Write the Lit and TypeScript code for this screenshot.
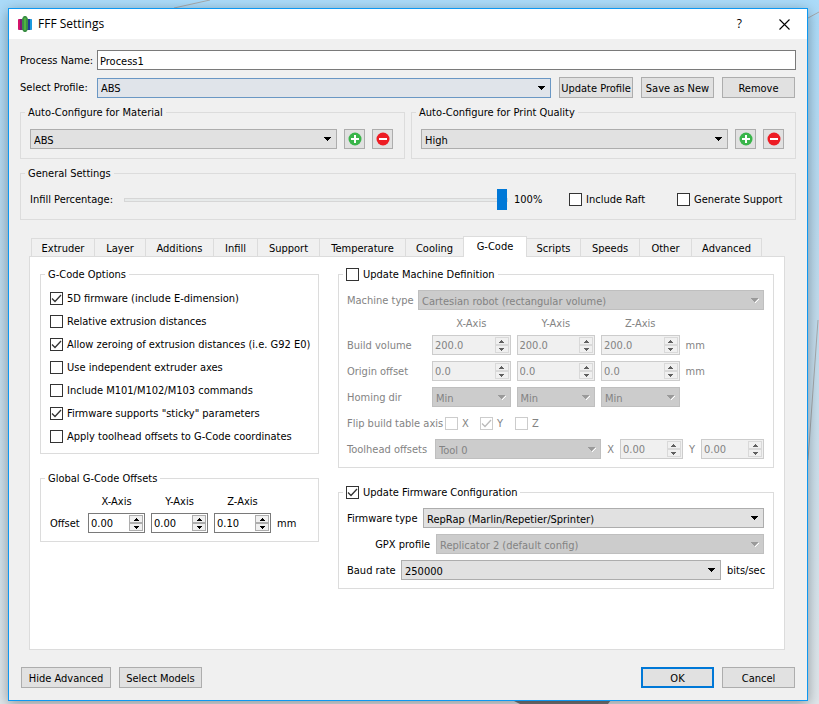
import { LitElement, html, css, svg, nothing } from "lit";
import { customElement } from "lit/decorators.js";
import { classMap } from "lit/directives/class-map.js";

const TABS = [
  "Extruder", "Layer", "Additions", "Infill", "Support", "Temperature",
  "Cooling", "G-Code", "Scripts", "Speeds", "Other", "Advanced",
];

const GCODE_OPTIONS: [string, boolean][] = [
  ["5D firmware (include E-dimension)", true],
  ["Relative extrusion distances", false],
  ["Allow zeroing of extrusion distances (i.e. G92 E0)", true],
  ["Use independent extruder axes", false],
  ["Include M101/M102/M103 commands", false],
  ["Firmware supports \"sticky\" parameters", true],
  ["Apply toolhead offsets to G-Code coordinates", false],
];

const AXES = ["X", "Y", "Z"];

@customElement("app-root")
export class AppRoot extends LitElement {
  static styles = css`
    :host {
      display: block;
      --line: #dcdcdc;
      --edge: #adadad;
      --dim: #838383;
    }
    * { box-sizing: border-box; }
    button, input, select, fieldset, legend {
      font: inherit;
      color: inherit;
      margin: 0;
      padding: 0;
      border-radius: 0;
    }
    .desktop {
      position: relative;
      display: flex;
      min-height: 100vh;
      padding: 8px 11px 3px 8px;
      background: linear-gradient(#abdbf9, #b9d9ee 30%, #d0e1eb 75%, #dfe6ea);
      font: 11px/15px "DejaVu Sans Condensed", "Noto Sans", sans-serif;
      color: #000;
    }
    .scene {
      position: absolute;
      inset: 0;
      width: 100%;
      height: 100%;
    }
    .dialog {
      position: relative;
      flex: 1;
      min-width: 0;
      display: flex;
      flex-direction: column;
      background: #f0f0f0;
      border: 1px solid #0d98f2;
      box-shadow: 0 3px 12px rgba(0, 0, 0, 0.35);
    }
    .titlebar {
      display: flex;
      align-items: center;
      height: 30px;
      padding: 0 17px 0 8px;
      background: #fff;
      font: 12px/16px "Open Sans", "Noto Sans", sans-serif;
    }
    .logo { width: 16px; height: 16px; margin-right: 5px; }
    .titlebar h1 { flex: 1; margin: 0; font: inherit; }
    .winbtn { display: flex; border: 0; background: none; margin-left: 37px; }
    .body {
      flex: 1;
      display: flex;
      flex-direction: column;
      padding: 11px 11px 12px;
    }
    .row { display: flex; align-items: center; gap: 6px; }
    .grow { flex: 1; min-width: 0; }

    .name { gap: 0; margin-bottom: 7px; }
    .name label, .profile label { flex: none; width: 77px; }
    .text {
      height: 20px;
      padding: 2px 2px 0;
      border: 1px solid #7a7a7a;
      background: #fff;
    }
    .profile { gap: 8px; margin-bottom: 7px; padding-right: 1px; }
    .profile label { margin-right: -8px; }

    .btn {
      height: 21px;
      padding-top: 1px;
      border: 1px solid var(--edge);
      background: #e1e1e1;
      white-space: nowrap;
    }
    .btn.w73 { width: 73px; }
    .btn.w74 { width: 74px; }
    .btn.w90 { width: 90px; }
    .btn.w83 { width: 83px; }
    .btn.primary { border: 2px solid #0078d7; }

    .combo { position: relative; display: flex; min-width: 0; }
    .combo select {
      appearance: none;
      width: 100%;
      height: 20px;
      padding: 2px 18px 0 3px;
      border: 1px solid var(--edge);
      background: #e1e1e1;
      opacity: 1;
    }
    .combo svg {
      position: absolute;
      right: 5px;
      top: 8px;
      width: 8px;
      height: 5px;
      pointer-events: none;
    }
    .combo.hot select { border-color: #6a97c4; background: #e0e4ea; }
    .combo select:disabled {
      border-color: #bfbfbf;
      background: #cccccc;
      color: var(--dim);
    }

    fieldset { min-width: 0; border: 1px solid var(--line); }
    legend { margin-left: -5px; padding: 0 3px; height: 14px; }
    .stack legend { margin-left: -4px; }
    legend .check { height: 14px; }

    .auto {
      display: grid;
      grid-template-columns: repeat(2, minmax(0, 1fr));
      gap: 6px;
      margin-bottom: 7px;
    }
    .auto fieldset { padding: 10px 11px 9px 9px; }
    .auto .row { gap: 7px; }
    .icon {
      display: flex;
      align-items: center;
      justify-content: center;
      width: 21px;
      height: 20px;
      border: 1px solid var(--edge);
      background: #e1e1e1;
    }
    .icon svg { width: 14px; height: 14px; }

    .general { padding: 9px 9px; }
    .general .row { height: 21px; }
    .general .lead { width: 88px; }
    .general output { width: 49px; }
    .general .raft { width: 102px; }
    .general .support { width: 109px; }
    .slider {
      appearance: none;
      height: 21px;
      background: none;
    }
    .slider::-webkit-slider-runnable-track {
      height: 4px;
      border: 1px solid #d6d6d6;
      background: #e7eaea;
    }
    .slider::-webkit-slider-thumb {
      appearance: none;
      width: 10px;
      height: 21px;
      margin-top: -10px;
      background: #0078d7;
    }

    .check { display: flex; align-items: center; gap: 4px; white-space: nowrap; }
    .box { position: relative; display: flex; flex: none; width: 13px; height: 13px; }
    .box input {
      appearance: none;
      width: 13px;
      height: 13px;
      border: 1px solid #333;
      background: #fff;
    }
    .box input:disabled { border-color: #ccc; }
    .box svg { position: absolute; inset: 0; pointer-events: none; }

    .tabs {
      display: grid;
      grid-template-columns: 63fr 51fr 68fr 44fr 62fr 86fr 58fr 63fr 54fr 59fr 52fr 71fr;
      align-items: end;
      height: 21px;
      margin: 16px 34px -1px 11px;
      position: relative;
    }
    .tab {
      height: 19px;
      min-width: 0;
      padding-top: 1px;
      border: solid var(--line);
      border-width: 1px 0 1px 1px;
      background: #f0f0f0;
      white-space: nowrap;
    }
    .tab:last-child { border-right-width: 1px; }
    .tab.active {
      height: 21px;
      margin-right: -1px;
      padding: 0 0 1px;
      border-width: 1px 1px 0;
      background: #fff;
      z-index: 1;
    }
    .pane {
      flex: 1;
      display: grid;
      grid-template-columns: minmax(0, 279fr) minmax(0, 436fr);
      align-items: start;
      gap: 19px;
      margin: 0 11px 17px 9px;
      padding: 10px 10px 60px;
      border: 1px solid var(--line);
      background: #fff;
    }
    .column { display: grid; gap: 17px; }
    .options { padding: 6px 9px 5px; }
    .options .check { height: 23px; }

    .grid { display: grid; gap: 6px; align-items: center; }
    .axis { height: 13px; text-align: center; }
    .offsets { padding: 9px 9px 8px; }
    .offsets .grid { grid-template-columns: 32px repeat(3, 57px) 1fr; }
    .stack { padding: 9px 9px 8px 8px; }
    .stack > .row + .row, .stack > .grid, .stack > .grid + .row { margin-top: 6px; }
    .stack > .row { height: 20px; }
    .machine .volume {
      grid-template-columns: 79px repeat(3, minmax(0, 79fr)) minmax(0, 79fr);
    }
    .dim { color: var(--dim); }
    .w65 { width: 65px; }
    .w92 { width: 92px; }
    .w82 { width: 82px; }
    .w70 { width: 70px; }
    .w83 { width: 83px; }
    .w48 { width: 48px; }
    .w37 { width: 37px; }
    .w65, .w92, .w82, .w70, .w48 { flex: none; white-space: nowrap; }
    .right { text-align: right; }
    .flip .check { width: 29px; }
    .tool .spin { width: 63px; }

    .spin {
      display: flex;
      min-width: 0;
      height: 20px;
      padding: 1px;
      border: 1px solid #7a7a7a;
      background: #fff;
    }
    .spin input {
      appearance: textfield;
      flex: 1;
      min-width: 0;
      width: 0;
      padding: 1px 0 0 1px;
      border: 0;
      background: none;
      outline: 0;
    }
    .spin input::-webkit-inner-spin-button { appearance: none; margin: 0; }
    .steps { display: grid; grid-template-rows: 8px 8px; width: 14px; }
    .steps button {
      display: flex;
      align-items: center;
      justify-content: center;
      border: 1px solid var(--edge);
      background: #f0f0f0;
    }
    .steps svg { width: 5px; height: 3px; }
    .spin.off { border-color: #ccc; background: #f0f0f0; color: var(--dim); }
    .spin.off .steps button { border-color: #d9d9d9; color: #606060; }

    .footer { display: flex; gap: 8px; padding: 0 1px; }
  `;

  private combo(id: string, value: string, opts: { off?: boolean; hot?: boolean; label?: string } = {}) {
    return html`<span class=${classMap({ combo: true, grow: true, hot: !!opts.hot })}>
      <select id=${id} ?disabled=${!!opts.off} aria-label=${opts.label ?? nothing}>
        <option>${value}</option>
      </select>
      <svg viewBox="0 0 8 5" shape-rendering="crispEdges">
        ${opts.off ? svg`<path d="M7 1h1v1h-1v1h-1v1h-1v1h-1v-1h1v-1h1v-1h1z" fill="#fff" />` : nothing}
        <path d="M0 0h7v1h-1v1h-1v1h-1v1h-1v-1h-1v-1h-1v-1h-1z" fill=${opts.off ? "#9a9a9a" : "#000"} />
      </svg>
    </span>`;
  }

  private box(checked: boolean, off = false) {
    return html`<span class="box">
      <input type="checkbox" .checked=${checked} ?disabled=${off} />
      ${checked
        ? html`<svg viewBox="0 0 13 13">
            <path d="M2 6.5L5 9.5L11 3" fill="none" stroke=${off ? "#bbb" : "#333"} stroke-width="1.3" />
          </svg>`
        : nothing}
    </span>`;
  }

  private spin(label: string, value: string, off = false) {
    return html`<span class=${classMap({ spin: true, off })}>
      <input type="number" step="any" aria-label=${label} .value=${value} ?disabled=${off} />
      <span class="steps">
        <button aria-label="Increase" ?disabled=${off}>
          <svg viewBox="0 0 5 3" shape-rendering="crispEdges"><path d="M2 0h1v1h1v1h1v1h-5v-1h1v-1h1z" fill="currentColor" /></svg>
        </button>
        <button aria-label="Decrease" ?disabled=${off}>
          <svg viewBox="0 0 5 3" shape-rendering="crispEdges"><path d="M0 0h5v1h-1v1h-1v1h-1v-1h-1v-1h-1z" fill="currentColor" /></svg>
        </button>
      </span>
    </span>`;
  }

  private autoGroup(title: string, id: string, value: string) {
    return html`<fieldset>
      <legend>${title}</legend>
      <div class="row">
        ${this.combo(id, value, { label: title })}
        <button class="icon" aria-label="Add">
          <svg viewBox="0 0 14 14">
            <circle cx="7" cy="7" r="6.5" fill="#39b54a" />
            <path d="M7 3v8M3 7h8" stroke="#fff" stroke-width="2" />
          </svg>
        </button>
        <button class="icon" aria-label="Remove">
          <svg viewBox="0 0 14 14">
            <circle cx="7" cy="7" r="6.5" fill="#ed1c24" />
            <path d="M3 7h8" stroke="#fff" stroke-width="2" />
          </svg>
        </button>
      </div>
    </fieldset>`;
  }

  render() {
    return html`
      <div class="desktop">
        <svg class="scene" viewBox="0 0 819 704" preserveAspectRatio="none">
          <g fill="none" stroke="#a5a9ac" stroke-width="1">
            <path d="M174 8L210 0M808 18L819 12M818 320L808 460" />
          </g>
          <path d="M512 700L520 704H608L611 700Z" fill="#76787a" />
        </svg>
        <div class="dialog" role="dialog" aria-labelledby="title">
          <header class="titlebar">
            <svg class="logo" viewBox="0 0 16 16">
              <path d="M2 3H6V14H2L1 13V4Z" fill="#7a1b78" />
              <path d="M2 3H3V14H2L1 13V4Z" fill="#d4146a" />
              <path d="M10 3H14L15 4V13L14 14H10Z" fill="#1b3f94" />
              <path d="M13 3H14L15 4V13L14 14H13Z" fill="#1c9be0" />
              <path d="M6 1L7 0H9L10 1L11 3V13L10 15L9 16H7L6 15L5 13V3Z" fill="#3b8f45" />
              <rect x="7" y="2" width="2" height="12" fill="#4fb540" />
            </svg>
            <h1 id="title">FFF Settings</h1>
            <button class="winbtn" aria-label="Help">?</button>
            <button class="winbtn" aria-label="Close">
              <svg width="11" height="11" viewBox="0 0 11 11">
                <path d="M.5 .5L10.500 10.500M10.500 .5L.5 10.500" stroke="#000" stroke-width="1.1" />
              </svg>
            </button>
          </header>
          <main class="body">
            <div class="row name">
              <label for="process">Process Name:</label>
              <input id="process" class="text grow" type="text" .value=${"Process1"} />
            </div>
            <div class="row profile">
              <label for="profile">Select Profile:</label>
              ${this.combo("profile", "ABS", { hot: true })}
              <button class="btn w74">Update Profile</button>
              <button class="btn w73">Save as New</button>
              <button class="btn w73">Remove</button>
            </div>
            <div class="auto">
              ${this.autoGroup("Auto-Configure for Material", "material", "ABS")}
              ${this.autoGroup("Auto-Configure for Print Quality", "quality", "High")}
            </div>
            <fieldset class="general">
              <legend>General Settings</legend>
              <div class="row">
                <label class="lead" for="infill">Infill Percentage:</label>
                <input id="infill" class="slider grow" type="range" min="0" max="100" .value=${"100"} />
                <output for="infill">100%</output>
                <label class="check raft">${this.box(false)}Include Raft</label>
                <label class="check support">${this.box(false)}Generate Support</label>
              </div>
            </fieldset>

            <div class="tabs" role="tablist">
              ${TABS.map((t) => html`<button
                role="tab"
                aria-selected=${t === "G-Code"}
                class=${classMap({ tab: true, active: t === "G-Code" })}
              >${t}</button>`)}
            </div>
            <section class="pane" role="tabpanel">
              <div class="column">
                <fieldset class="options">
                  <legend>G-Code Options</legend>
                  ${GCODE_OPTIONS.map(([text, on]) => html`<label class="check">${this.box(on)}${text}</label>`)}
                </fieldset>
                <fieldset class="offsets">
                  <legend>Global G-Code Offsets</legend>
                  <div class="grid">
                    <span></span>
                    ${AXES.map((a) => html`<span class="axis">${a}-Axis</span>`)}
                    <span></span>
                    <span>Offset</span>
                    ${["0.00", "0.00", "0.10"].map((v, i) => this.spin(`Offset ${AXES[i]}`, v))}
                    <span>mm</span>
                  </div>
                </fieldset>
              </div>

              <div class="column">
                <fieldset class="stack machine">
                  <legend><label class="check">${this.box(false)}Update Machine Definition</label></legend>
                  <div class="row dim">
                    <label class="w65" for="machine">Machine type</label>
                    ${this.combo("machine", "Cartesian robot (rectangular volume)", { off: true })}
                  </div>
                  <div class="grid volume dim">
                    <span></span>
                    ${AXES.map((a) => html`<span class="axis">${a}-Axis</span>`)}
                    <span></span>
                    <span>Build volume</span>
                    ${AXES.map((a) => this.spin(`Build volume ${a}`, "200.0", true))}
                    <span>mm</span>
                    <span>Origin offset</span>
                    ${AXES.map((a) => this.spin(`Origin offset ${a}`, "0.0", true))}
                    <span>mm</span>
                    <span>Homing dir</span>
                    ${AXES.map((a) => this.combo(`homing-${a}`, "Min", { off: true, label: `Homing dir ${a}` }))}
                  </div>
                  <div class="row flip dim">
                    <span class="w92">Flip build table axis</span>
                    ${AXES.map((a) => html`<label class="check">${this.box(a === "Y", true)}${a}</label>`)}
                  </div>
                  <div class="row tool dim">
                    <label class="w82" for="tool">Toolhead offsets</label>
                    ${this.combo("tool", "Tool 0", { off: true })}
                    <span>X</span>
                    ${this.spin("Toolhead offset X", "0.00", true)}
                    <span>Y</span>
                    ${this.spin("Toolhead offset Y", "0.00", true)}
                  </div>
                </fieldset>
                <fieldset class="stack">
                  <legend><label class="check">${this.box(true)}Update Firmware Configuration</label></legend>
                  <div class="row">
                    <label class="w70" for="firmware">Firmware type</label>
                    ${this.combo("firmware", "RepRap (Marlin/Repetier/Sprinter)")}
                  </div>
                  <div class="row">
                    <label class="w83 right" for="gpx">GPX profile</label>
                    ${this.combo("gpx", "Replicator 2 (default config)", { off: true })}
                  </div>
                  <div class="row">
                    <label class="w48" for="baud">Baud rate</label>
                    ${this.combo("baud", "250000")}
                    <span class="w37">bits/sec</span>
                  </div>
                </fieldset>
              </div>
            </section>

            <footer class="footer">
              <button class="btn w90">Hide Advanced</button>
              <button class="btn w83">Select Models</button>
              <span class="grow"></span>
              <button class="btn w73 primary">OK</button>
              <button class="btn w73">Cancel</button>
            </footer>
          </main>
        </div>
      </div>
    `;
  }
}
